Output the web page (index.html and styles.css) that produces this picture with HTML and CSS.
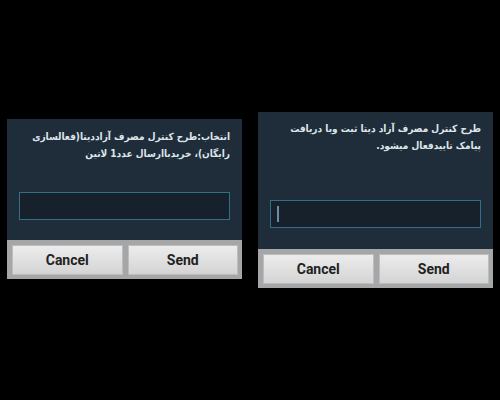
FILE: index.html
```html
<!DOCTYPE html>
<html lang="fa">
<head>
<meta charset="utf-8">
<link rel="stylesheet" href="styles.css">
</head>
<body>
<div class="screen">
  <div class="dialog dialog-a">
    <div class="content">
      <p class="msg" dir="rtl">انتخاب:طرح کنترل مصرف آزاددیتا(فعالسازی<br>رایگان)، خریدباارسال عدد1 لاتین</p>
      <div class="field"></div>
    </div>
    <div class="bar">
      <div class="btn">Cancel</div>
      <div class="btn">Send</div>
    </div>
  </div>
  <div class="dialog dialog-b">
    <div class="content">
      <p class="msg" dir="rtl">طرح کنترل مصرف آزاد دیتا ثبت وبا دریافت<br>پیامک تاییدفعال میشود.</p>
      <div class="field"><span class="cursor"></span></div>
    </div>
    <div class="bar">
      <div class="btn">Cancel</div>
      <div class="btn">Send</div>
    </div>
  </div>
</div>
</body>
</html>
```
FILE: styles.css
```css
html, body {
  margin: 0;
  padding: 0;
  background: #000;
  width: 500px;
  height: 400px;
  overflow: hidden;
}
.screen {
  display: flex;
  align-items: flex-start;
  padding-left: 7px;
  gap: 16px;
}
.dialog {
  width: 235px;
  background: #1f2d3b;
  display: flex;
  flex-direction: column;
}
.dialog-a { margin-top: 119px; }
.dialog-b { margin-top: 112px; }
.content {
  display: flex;
  flex-direction: column;
  padding: 0 12px;
}
.msg {
  margin: 0;
  font-family: "DejaVu Sans Condensed", "DejaVu Sans", sans-serif;
  font-size: 10px;
  font-weight: bold;
  line-height: 17px;
  color: #dfe5ea;
  text-align: right;
  white-space: nowrap;
}
.dialog-a .msg { padding-top: 9px; }
.dialog-b .msg { padding-top: 8px; }
.field {
  height: 26px;
  background: #17212b;
  border: 1px solid #2f6f89;
  display: flex;
  align-items: center;
  padding-left: 6px;
}
.dialog-a .field { margin: 30px 0 20px; }
.dialog-b .field { margin: 46px 0 21px; }
.cursor {
  width: 2px;
  height: 16px;
  background: #6b8ea3;
}
.bar {
  background: #a4a6a7;
  display: flex;
  gap: 5px;
  padding: 5px 4px 4px 5px;
}
.btn {
  flex: 1;
  height: 28px;
  border: 1px solid #bdbdbd;
  background: linear-gradient(#ececec, #d4d4d4);
  display: flex;
  align-items: center;
  justify-content: center;
  font-family: Roboto, "Liberation Sans", sans-serif;
  font-weight: bold;
  font-size: 14px;
  color: #222;
}
```
